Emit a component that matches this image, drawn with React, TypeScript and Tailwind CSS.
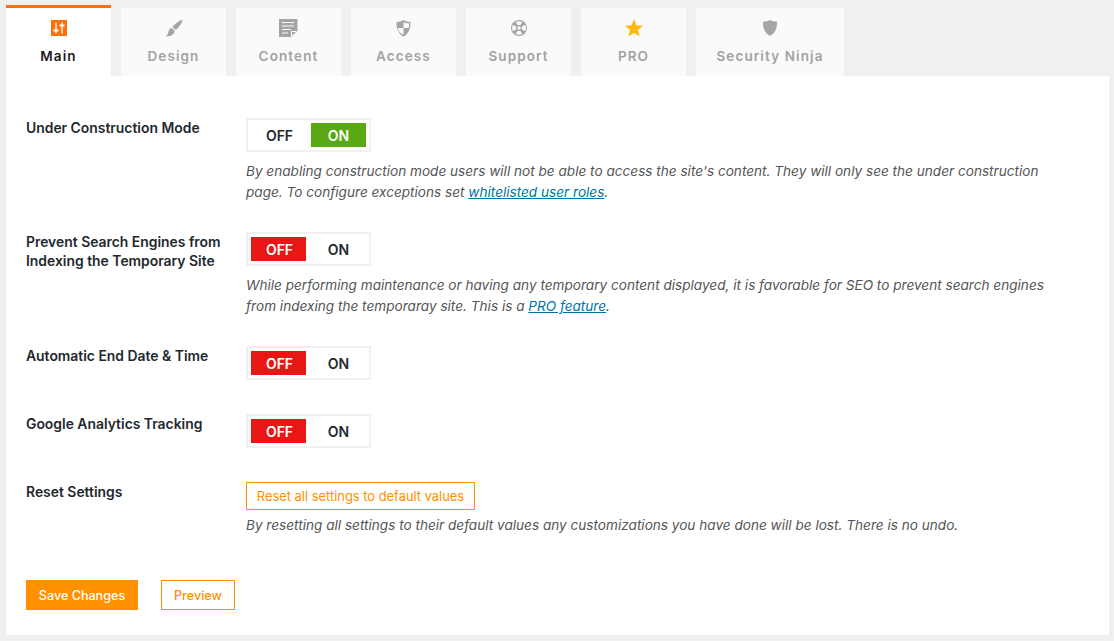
import type { ReactNode } from "react";

function SlidersIcon() {
  return (
    <svg width="16" height="16" viewBox="0 0 16 16" aria-hidden="true">
      <rect width="16" height="16" fill="#ff6f0a" />
      <path d="M5 2.500v11M11 2.500v11" stroke="#fff" strokeWidth="1.300" />
      <path d="M2.500 10.500h5M8.500 5.500h5" stroke="#fff" strokeWidth="2" />
    </svg>
  );
}

function BrushIcon() {
  return (
    <svg width="18" height="18" viewBox="0 0 18 18" aria-hidden="true">
      <path d="M17.500.8C17.600 3.500 13.500 9 10.700 11 9.800 10 8.200 8.600 7.400 8 9.600 5.200 14.600 1 17.500.8Z" fill="#a5a5a5" />
      <path d="M6.300 9c1.400.4 3 2 3.200 3.300C9.400 15.400 5.300 18 .5 17.300 2.800 16 3 14.500 3.500 12.500 3.900 10.800 5 9.500 6.300 9Z" fill="#a5a5a5" />
    </svg>
  );
}

function NoteIcon() {
  return (
    <svg width="19" height="18" viewBox="0 0 19 18" aria-hidden="true">
      <path d="M0 0h18.500v11.500L12 18H0Z" fill="#a5a5a5" />
      <path d="M3 3.500h12M3 7h12M3 10.500h9M3 14h6" stroke="#fafafa" strokeWidth="1.200" />
      <path d="M12.500 17v-4.500H17" fill="none" stroke="#fafafa" strokeWidth="1.200" />
    </svg>
  );
}

function ShieldHalfIcon() {
  return (
    <svg width="15" height="17" viewBox="0 0 15 17" aria-hidden="true">
      <path d="M7.500 0C9.500 1.300 12 1.900 14.500 1.900 14.800 8 13 13.500 7.500 16.700 2 13.500.2 8 .5 1.900 3 1.900 5.500 1.300 7.500 0Z" fill="#a5a5a5" />
      <path d="M7.500 2.200v5.800H2.100c.2 3 1.700 5.600 5.400 6.400V8h5.300c.2-1.500.2-3 .2-4.800-2-.1-3.900-.4-5.500-1Z" fill="#fafafa" />
    </svg>
  );
}

function SosIcon() {
  return (
    <svg width="16" height="16" viewBox="0 0 16 16" aria-hidden="true">
      <circle cx="8" cy="8" r="8" fill="#a5a5a5" />
      <circle cx="8" cy="8" r="1.700" fill="#fafafa" />
      <path d="M4.700 1.900C6.700.9 9.300.9 11.300 1.900L9.300 5.300C8.500 5 7.500 5 6.700 5.300ZM4.700 14.100C6.700 15.100 9.300 15.100 11.300 14.100L9.300 10.700C8.500 11 7.500 11 6.700 10.700ZM1.900 4.700C.9 6.700.9 9.300 1.900 11.300L5.300 9.300C5 8.500 5 7.500 5.300 6.700ZM14.100 4.700C15.100 6.700 15.100 9.300 14.100 11.300L10.700 9.300C11 8.500 11 7.500 10.700 6.700Z" fill="#fafafa" />
    </svg>
  );
}

function StarIcon() {
  return (
    <svg width="18" height="18" viewBox="0 0 18 18" aria-hidden="true">
      <path d="M9 0l2.500 6.200 6.500.5-5 4.200 1.600 6.600L9 14l-5.600 3.500L5 10.900 0 6.700l6.500-.5Z" fill="#ffb90f" />
    </svg>
  );
}

function ShieldIcon() {
  return (
    <svg width="14" height="16" viewBox="0 0 14 16" aria-hidden="true">
      <path d="M7 0c2 1.100 4.500 1.700 7 1.700C14.200 8 12.500 13 7 16 1.500 13-.2 8 0 1.700 2.500 1.700 5 1.100 7 0Z" fill="#a5a5a5" />
    </svg>
  );
}

function Tab({ icon, label, active, wide }: { icon: ReactNode; label: string; active?: boolean; wide?: boolean }) {
  return (
    <div
      className={`flex flex-col items-center tracking-[1.1px] text-[13.5px] font-semibold ${wide ? "w-[148px]" : "w-[105px]"} ${
        active ? "h-[71px] border-t-[3px] border-[#ff6f0a] bg-white text-[#1a1a1a]" : "h-[68px] bg-[#fafafa] text-[#a2a2a2]"
      }`}
    >
      <div className="flex h-[18px] mt-[11px] items-center justify-center">{icon}</div>
      <span className="mt-[9px] leading-[20px]">{label}</span>
    </div>
  );
}

function Toggle({ on }: { on?: boolean }) {
  return (
    <div className="flex h-[34px] w-[125px] border-2 border-[#f0f0f0] bg-white p-[3px] text-[14px] font-semibold leading-[25px] text-center text-[#23282d]">
      <div className={`w-[55px] pl-[2px] ${on ? "" : "bg-[#e91616] text-white"}`}>OFF</div>
      <div className={`ml-[5px] w-[55px] ${on ? "bg-[#5aa914] text-white" : ""}`}>ON</div>
    </div>
  );
}

function Row({ label, children, className }: { label: ReactNode; children: ReactNode; className?: string }) {
  return (
    <div className={`flex ${className ?? ""}`}>
      <div className="w-[220px] pt-[1px] text-[13.9px] leading-[19px] font-semibold text-[#23282d]">{label}</div>
      <div className="flex-1">{children}</div>
    </div>
  );
}

function Note({ children }: { children: ReactNode }) {
  return <p className="mt-[9px] w-[810px] text-[13.6px] leading-[21px] italic text-[#555]">{children}</p>;
}

export default function App() {
  return (
    <div className="h-[641px] w-[1114px] overflow-hidden bg-[#f0f0f0] pl-[6px] pt-[5px] font-['Inter',sans-serif]">
      {/* Tabs */}
      <div className="flex items-end gap-[10px]">
        <Tab active icon={<SlidersIcon />} label="Main" />
        <Tab icon={<BrushIcon />} label="Design" />
        <Tab icon={<NoteIcon />} label="Content" />
        <Tab icon={<ShieldHalfIcon />} label="Access" />
        <Tab icon={<SosIcon />} label="Support" />
        <Tab icon={<StarIcon />} label="PRO" />
        <Tab wide icon={<ShieldIcon />} label="Security Ninja" />
      </div>

      {/* Settings panel */}
      <div className="h-[559px] w-[1103px] bg-white pl-[20px] pt-[42px]">
        <Row label="Under Construction Mode">
          <Toggle on />
          <Note>
            By enabling construction mode users will not be able to access the site's content. They will only see the under construction page. To configure exceptions set{" "}
            <a className="text-[#0073aa] underline">whitelisted user roles</a>.
          </Note>
        </Row>
        <Row className="mt-[29px]" label={<>Prevent Search Engines from<br />Indexing the Temporary Site</>}>
          <Toggle />
          <Note>
            While performing maintenance or having any temporary content displayed, it is favorable for SEO to prevent search engines from indexing the temporaray site. This is a{" "}
            <a className="text-[#0073aa] underline">PRO feature</a>.
          </Note>
        </Row>
        <Row className="mt-[29px]" label="Automatic End Date & Time">
          <Toggle />
        </Row>
        <Row className="mt-[34px]" label="Google Analytics Tracking">
          <Toggle />
        </Row>
        <Row className="mt-[34px]" label="Reset Settings">
          <button className="h-[28px] w-[229px] border border-[#ff9000] pt-[1px] text-[12.9px] text-[#ff9000]">Reset all settings to default values</button>
          <p className="mt-[5px] text-[13.6px] leading-[21px] italic text-[#555]">
            By resetting all settings to their default values any customizations you have done will be lost. There is no undo.
          </p>
        </Row>
        <div className="mt-[44px] flex gap-[23px]">
          <button className="h-[30px] w-[112px] bg-[#ff9000] pt-[2px] text-[12.6px] font-medium text-white">Save Changes</button>
          <button className="h-[30px] w-[74px] border border-[#ff9000] pt-[2px] text-[12.6px] font-medium text-[#ff9000]">Preview</button>
        </div>
      </div>
    </div>
  );
}
